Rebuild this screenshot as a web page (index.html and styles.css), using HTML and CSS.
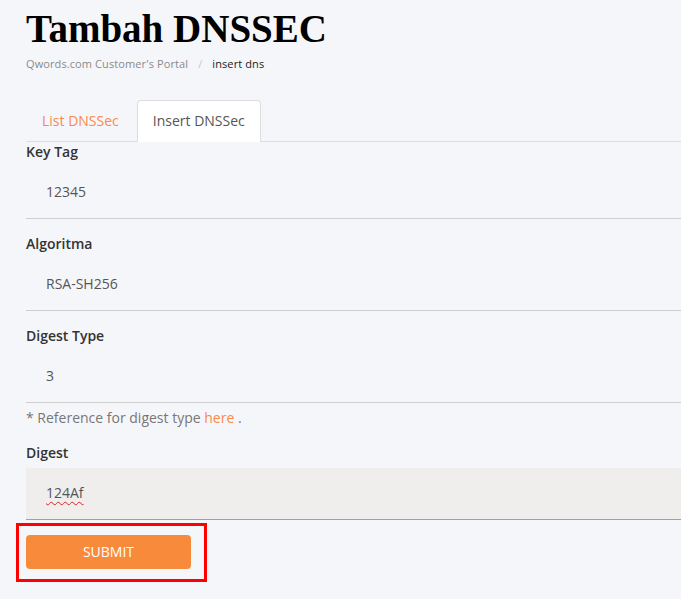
FILE: index.html
```html
<!DOCTYPE html>
<html>
<head>
<meta charset="utf-8">
<link rel="stylesheet" href="styles.css">
</head>
<body>
<div class="page">
  <h1 class="title">Tambah DNSSEC</h1>
  <div class="crumbs"><span class="crumb-link">Qwords.com Customer's Portal</span><span class="crumb-sep">/</span><span class="crumb-cur">insert dns</span></div>
  <div class="tabs">
    <div class="tab">List DNSSec</div>
    <div class="tab active">Insert DNSSec</div>
  </div>
  <form class="form">
    <div class="group">
      <div class="label">Key Tag</div>
      <div class="input">12345</div>
    </div>
    <div class="group">
      <div class="label">Algoritma</div>
      <div class="input">RSA-SH256</div>
    </div>
    <div class="group">
      <div class="label">Digest Type</div>
      <div class="input">3</div>
      <div class="help">* Reference for digest type <span class="link">here</span> .</div>
    </div>
    <div class="group">
      <div class="label">Digest</div>
      <div class="input focused"><span class="typo">124Af</span></div>
    </div>
    <div class="submit-wrap">
      <div class="button">SUBMIT</div>
      <div class="highlight"></div>
    </div>
  </form>
</div>
</body>
</html>
```

FILE: styles.css
```css
html, body {
  margin: 0;
  padding: 0;
  background: #f5f6fa;
}
body {
  font-family: "Open Sans", "Noto Sans", sans-serif;
  font-size: 14px;
  color: #333;
}
.page {
  padding: 0 0 20px 26px;
}
.title {
  margin: 0;
  padding-top: 6px;
  font-family: "Liberation Serif", serif;
  font-weight: bold;
  font-size: 39px;
  line-height: 46px;
  color: #000;
}
.crumbs {
  margin-top: 4px;
  font-size: 11px;
  line-height: 16px;
  color: #8a8a8a;
  letter-spacing: 0.1px;
}
.crumb-sep {
  color: #c8c8c8;
  margin: 0 10px;
}
.crumb-cur {
  color: #222;
}
.tabs {
  display: flex;
  margin-top: 28px;
  border-bottom: 1px solid #dddddd;
}
.tab {
  padding: 10px 15px;
  line-height: 20px;
  border: 1px solid transparent;
  border-bottom: none;
  margin-right: 2px;
  color: #f98a4f;
  border-radius: 4px 4px 0 0;
}
.tab.active {
  background: #fff;
  border-color: #dddddd;
  color: #555;
  margin-bottom: -1px;
  padding-bottom: 11px;
}
.group {
  margin-bottom: 15px;
}
.label {
  font-weight: 600;
  line-height: 20px;
  color: #333;
  margin-bottom: 5px;
}
.input {
  box-sizing: border-box;
  height: 52px;
  padding: 15px 20px 0;
  line-height: 20px;
  color: #555;
  border-bottom: 1px solid #cfcfcf;
}
.input.focused {
  background: #efeeed;
  border-bottom-color: #ef8a45;
}
.typo {
  text-decoration: underline wavy #e02020;
  text-decoration-thickness: 1px;
  text-underline-offset: 3px;
}
.help {
  margin-top: 5px;
  line-height: 20px;
  color: #777;
}
.link {
  color: #f98a4f;
}
.submit-wrap {
  position: relative;
  width: 165px;
}
.button {
  height: 34px;
  line-height: 34px;
  text-align: center;
  color: #fff;
  background: #f88a3b;
  border-radius: 4px;
}
.highlight {
  position: absolute;
  left: -10px;
  top: -12px;
  width: 191px;
  height: 59px;
  box-sizing: border-box;
  border: 3px solid #ff0000;
}
```
